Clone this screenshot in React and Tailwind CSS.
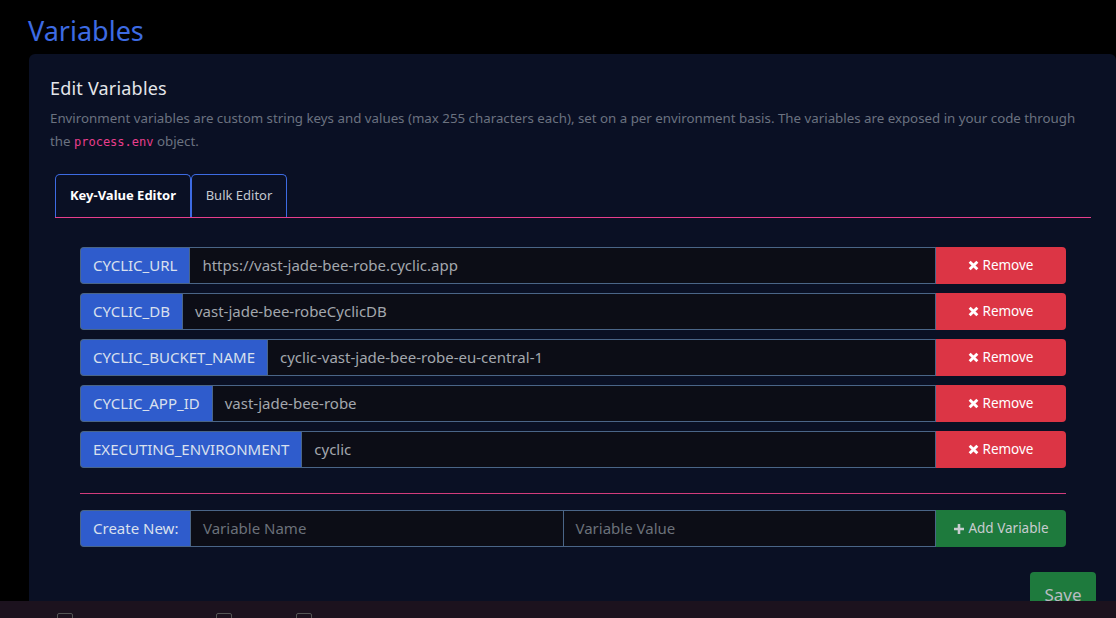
import React from "react";

const rows = [
  ["CYCLIC_URL", "https://vast-jade-bee-robe.cyclic.app"],
  ["CYCLIC_DB", "vast-jade-bee-robeCyclicDB"],
  ["CYCLIC_BUCKET_NAME", "cyclic-vast-jade-bee-robe-eu-central-1"],
  ["CYCLIC_APP_ID", "vast-jade-bee-robe"],
  ["EXECUTING_ENVIRONMENT", "cyclic"],
];

function XIcon() {
  return (
    <svg width="11" height="11" viewBox="0 0 10 10" className="mr-[3px]">
      <path d="M1.5 1.5 L8.5 8.5 M8.5 1.5 L1.5 8.5" stroke="white" strokeWidth="2.6" strokeLinecap="butt" />
    </svg>
  );
}

function PlusIcon() {
  return (
    <svg width="12" height="12" viewBox="0 0 12 12" className="mr-[3px]">
      <path d="M6 1 V11 M1 6 H11" stroke="#c8ccd0" strokeWidth="2.6" />
    </svg>
  );
}

export default function App() {
  return (
    <div
      className="w-[1116px] h-[618px] bg-black overflow-hidden flex flex-col"
      style={{ fontFamily: '"Noto Sans", "Open Sans", sans-serif' }}
    >
      <div className="flex-1 flex flex-col overflow-hidden">
        <h1 className="shrink-0 pl-[28px] pt-[13px] h-[54px] text-[27px] leading-[36px] text-[#3d6be3]">Variables</h1>
        <div className="ml-[29px] flex-1 bg-[#0a1024] rounded-t-[6px] pl-[21px] pr-[26px] pt-[22px]">
          <h2 className="text-[18px] leading-[24px] text-[#e4e6ea] tracking-[0.2px]">Edit Variables</h2>
          <p className="mt-[7px] text-[13.3px] leading-[23px] text-[#6b7280]">
            Environment variables are custom string keys and values (max 255 characters each), set on a per environment basis. The variables are exposed in your code through the{" "}
            <code className="text-[#e83e8c] text-[12px]" style={{ fontFamily: '"DejaVu Sans Mono", monospace' }}>process.env</code> object.
          </p>
          <div className="mt-[20px] ml-[5px] flex border-b border-[#e83e8c] w-[1036px]">
            <div className="h-[43px] w-[136px] flex items-center justify-center border border-b-0 border-[#3d6be3] rounded-t-[5px] text-[13px] font-bold text-white">
              Key-Value Editor
            </div>
            <div className="h-[43px] w-[96px] flex items-center justify-center border border-b-0 border-[#3d6be3] rounded-t-[5px] text-[13px] text-[#c4c8d0]">
              Bulk Editor
            </div>
          </div>
          <div className="ml-[30px] w-[986px] mt-[29px] flex flex-col gap-[9px]">
            {rows.map(([k, v]) => (
              <div key={k} className="flex h-[37px] text-[15px]">
                <div className="bg-[#2f5ccc] text-[#d9e0ee] px-[12px] flex items-center rounded-l-[4px] border border-r-0 border-[#4a6587] whitespace-nowrap">
                  {k}
                </div>
                <div className="flex-1 bg-[#0c0d16] border border-[#4a6587] flex items-center px-[12px] text-[#a3a7ad]">
                  {v}
                </div>
                <div className="w-[130px] bg-[#dc3545] rounded-r-[4px] flex items-center justify-center text-[13.5px] text-white">
                  <XIcon />
                  Remove
                </div>
              </div>
            ))}
          </div>
          <div className="ml-[30px] w-[986px] mt-[25px] h-px bg-[#d23c7c]" />
          <div className="ml-[30px] w-[986px] mt-[16px] flex h-[37px] text-[15px]">
            <div className="w-[110px] bg-[#2f5ccc] text-[#d9e0ee] pl-[12px] flex items-center rounded-l-[4px] border border-r-0 border-[#4a6587] whitespace-nowrap">
              Create New:
            </div>
            <div className="flex-1 bg-[#0c0d16] border border-[#4a6587] flex items-center px-[12px] text-[#6b717a]">
              Variable Name
            </div>
            <div className="flex-1 bg-[#0c0d16] border border-l-0 border-[#4a6587] flex items-center px-[12px] text-[#6b717a]">
              Variable Value
            </div>
            <div className="w-[130px] bg-[#1e7a3d] rounded-r-[4px] flex items-center justify-center text-[13.5px] text-[#c8ccd0]">
              <PlusIcon />
              Add Variable
            </div>
          </div>
          <div className="flex justify-end mr-[-6px] mt-[25px]">
            <div className="w-[66px] h-[40px] bg-[#1e7a3d] rounded-[4px] flex justify-center pt-[10px] text-[17px] text-[#b8bcc2]">
              Save
            </div>
          </div>
        </div>
      </div>
      <div className="h-[17px] bg-[#1c121e] shrink-0 relative">
        <div className="absolute left-[57px] top-[12px] w-[16px] h-[8px] border border-[#555] rounded-[2px]" />
        <div className="absolute left-[216px] top-[12px] w-[16px] h-[8px] border border-[#555] rounded-[2px]" />
        <div className="absolute left-[296px] top-[12px] w-[16px] h-[8px] border border-[#555] rounded-[2px]" />
      </div>
    </div>
  );
}
